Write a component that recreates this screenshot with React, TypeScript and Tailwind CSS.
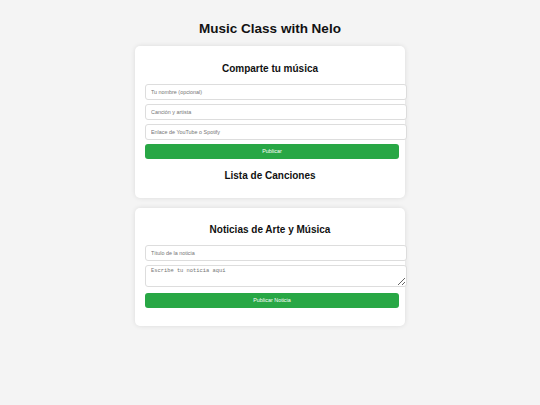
export default function App() {
  return (
    <div className="min-h-[405px] bg-[#f4f4f4] px-[10px] pt-[10px] pb-[10px] font-['Liberation_Sans',Arial,sans-serif] text-[#111]">
      <h1 className="mt-[10px] mb-[8px] text-center text-[13.5px] leading-[18px] font-bold">
        Music Class with Nelo
      </h1>

      <div className="mx-auto w-[270px]">
        <section className="mb-[10px] rounded-[5px] bg-white px-[10px] pt-[10px] pb-[10px] shadow-[0_0_5px_rgba(0,0,0,0.1)]">
          <h2 className="mt-[6px] mb-[8px] text-center text-[10px] leading-[14px] font-bold">
            Comparte tu música
          </h2>
          <div className="flex flex-col gap-[4px]">
            <input
              className="box-content h-[14px] w-full rounded-[3px] border border-[#ddd] bg-white px-[5px] text-[5.4px] outline-none placeholder:text-[#757575]"
              placeholder="Tu nombre (opcional)"
            />
            <input
              className="box-content h-[14px] w-full rounded-[3px] border border-[#ddd] bg-white px-[5px] text-[5.4px] outline-none placeholder:text-[#757575]"
              placeholder="Canción y artista"
            />
            <input
              className="box-content h-[14px] w-full rounded-[3px] border border-[#ddd] bg-white px-[5px] text-[5.4px] outline-none placeholder:text-[#757575]"
              placeholder="Enlace de YouTube o Spotify"
            />
            <button className="h-[15px] w-[254px] rounded-[3px] bg-[#28a745] text-[5.4px] text-white">
              Publicar
            </button>
          </div>
          <h2 className="mt-[10px] mb-[5px] text-center text-[10px] leading-[14px] font-bold">
            Lista de Canciones
          </h2>
        </section>

        <section className="rounded-[5px] bg-white px-[10px] pt-[10px] pb-[18px] shadow-[0_0_5px_rgba(0,0,0,0.1)]">
          <h2 className="mt-[5px] mb-[8px] text-center text-[10px] leading-[14px] font-bold">
            Noticias de Arte y Música
          </h2>
          <div className="flex flex-col">
            <input
              className="box-content h-[14px] w-full rounded-[3px] border border-[#ddd] bg-white px-[5px] text-[5.4px] outline-none placeholder:text-[#757575]"
              placeholder="Título de la noticia"
            />
            <textarea
              className="mt-[4px] box-content h-[16px] w-full rounded-[3px] border border-[#ddd] bg-white px-[5px] py-[2px] font-['Liberation_Mono',monospace] text-[5.4px] leading-[7px] outline-none placeholder:text-[#757575]"
              placeholder="Escribe tu noticia aquí"
            />
            <button className="mt-[6px] h-[15px] w-[254px] rounded-[3px] bg-[#28a745] text-[5.4px] text-white">
              Publicar Noticia
            </button>
          </div>
        </section>
      </div>
    </div>
  );
}
